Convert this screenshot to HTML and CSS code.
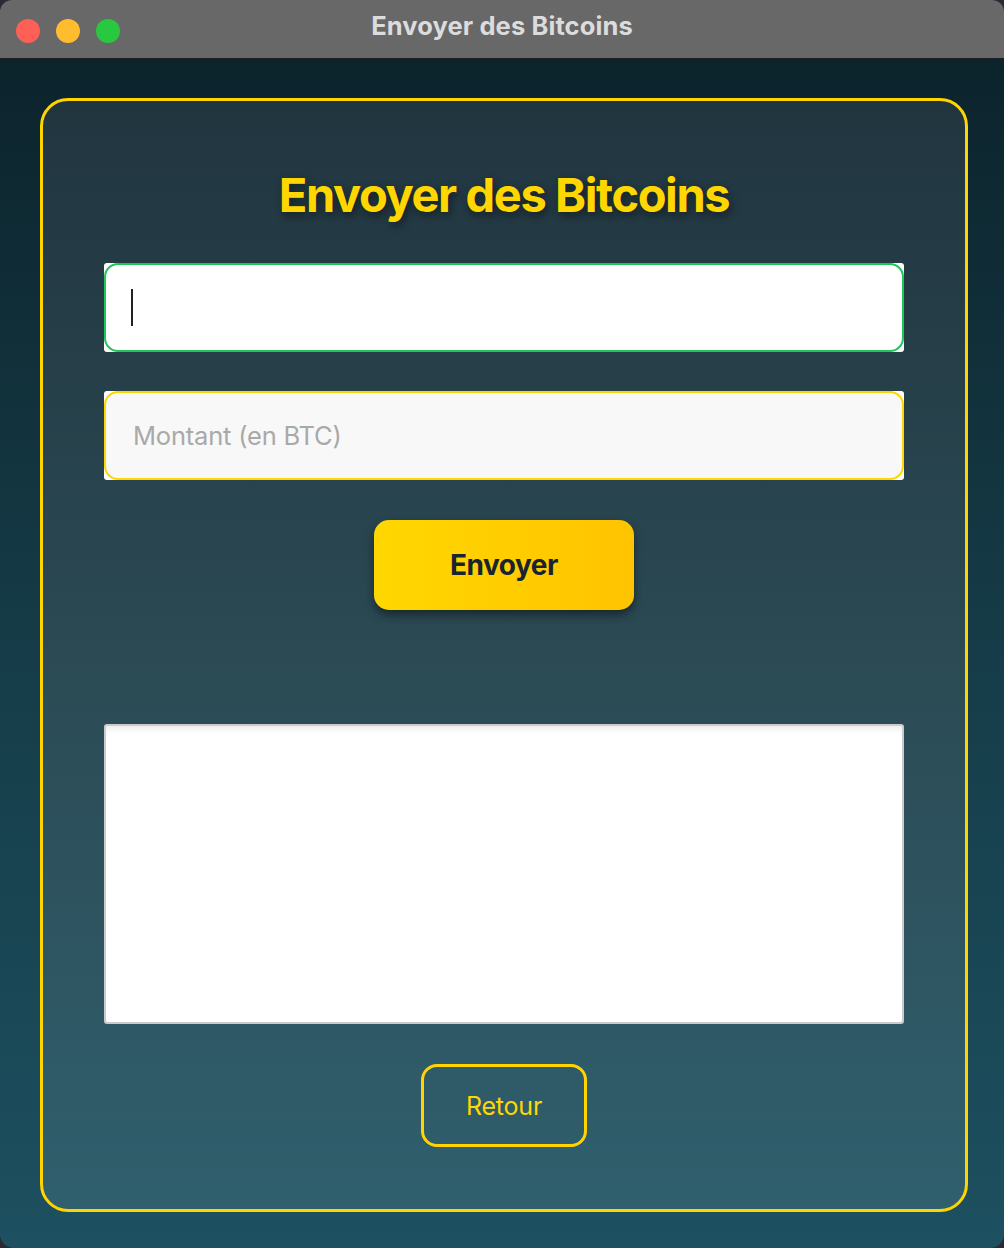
FILE: index.html
```html
<!DOCTYPE html>
<html lang="fr">
<head>
<meta charset="utf-8">
<title>Envoyer des Bitcoins</title>
<link rel="stylesheet" href="styles.css">
</head>
<body>
<div class="window">
  <div class="titlebar">
    <div class="lights">
      <span class="light red"></span>
      <span class="light yellow"></span>
      <span class="light green"></span>
    </div>
    <div class="wtitle">Envoyer des Bitcoins</div>
  </div>
  <div class="content">
    <div class="card">
      <h1 class="heading">Envoyer des Bitcoins</h1>
      <div class="field">
        <div class="input focused"><span class="caret"></span></div>
      </div>
      <div class="field">
        <div class="input amount"><span class="placeholder">Montant (en BTC)</span></div>
      </div>
      <button class="send">Envoyer</button>
      <div class="output"></div>
      <button class="back">Retour</button>
    </div>
  </div>
</div>
</body>
</html>
```
FILE: styles.css
```css
* { box-sizing: border-box; }
html, body { margin: 0; padding: 0; }
body {
  width: 1004px;
  height: 1248px;
  background: #2a2a33;
  font-family: Inter, "Noto Sans", sans-serif;
  overflow: hidden;
}
.window {
  width: 1004px;
  height: 1248px;
  display: flex;
  flex-direction: column;
  border-radius: 12px 12px 14px 14px;
  overflow: hidden;
  background: linear-gradient(180deg, #0b2129 0%, #153b47 50%, #1d5060 100%);
}
.titlebar {
  position: relative;
  height: 59px;
  flex: none;
  background: #686868;
  border-bottom: 1px solid #1e1e1e;
  display: flex;
  align-items: center;
  justify-content: center;
}
.lights {
  position: absolute;
  left: 16px;
  top: 19px;
  display: flex;
  gap: 16px;
}
.light { width: 24px; height: 24px; border-radius: 50%; display: block; }
.red { background: #fe5f57; }
.yellow { background: #febc2e; }
.green { background: #28c840; }
.wtitle {
  color: #dcdcdc;
  font-weight: 700;
  font-size: 25.5px;
  letter-spacing: 0.1px;
  margin-top: -7px;
}
.content {
  flex: 1;
  padding: 39px 36px 36px 40px;
  display: flex;
}
.card {
  flex: 1;
  border: 3px solid #ffd400;
  border-radius: 28px;
  background: linear-gradient(180deg, #21353f 0%, #2b4a54 50%, #305f6d 100%);
  padding: 62px 61px 62px;
  display: flex;
  flex-direction: column;
  align-items: center;
}
.heading {
  margin: 0 0 36px;
  color: #ffd700;
  font-size: 47px;
  font-weight: 700;
  letter-spacing: -1.4px;
  line-height: 64px;
  text-shadow: 2px 4px 8px rgba(0,0,0,0.45);
}
.field {
  width: 800px;
  height: 89px;
  background: #fff;
  border-radius: 3px;
  margin-bottom: 39px;
  flex: none;
}
.input {
  height: 100%;
  border-radius: 14px;
  border: 2px solid #22c55a;
  background: #fff;
  display: flex;
  align-items: center;
  padding-left: 25px;
}
.caret {
  width: 2px;
  height: 37px;
  background: #222;
  display: block;
}
.input.amount {
  border-color: #ffd700;
  background: #f8f8f8;
  padding-left: 27px;
}
.placeholder {
  color: #a9a9a9;
  font-size: 25.5px;
  letter-spacing: -0.2px;
}
.send {
  flex: none;
  width: 260px;
  height: 90px;
  margin-top: 1px;
  border: none;
  border-radius: 15px;
  background: linear-gradient(90deg, #ffd700 0%, #ffc400 100%);
  box-shadow: 0 5px 10px rgba(0,0,0,0.45);
  color: #1a2430;
  font-family: Inter, "Noto Sans", sans-serif;
  font-weight: 700;
  font-size: 28px;
  letter-spacing: -0.5px;
  padding: 0;
}
.output {
  flex: none;
  width: 800px;
  height: 300px;
  margin-top: 114px;
  background: #fff;
  border: 2px solid #c9cccc;
  border-radius: 3px;
  box-shadow: inset 0 6px 6px -3px rgba(0,0,0,0.08);
}
.back {
  flex: none;
  margin-top: 40px;
  width: 166px;
  height: 83px;
  background: transparent;
  border: 3px solid #ffd400;
  border-radius: 16px;
  color: #ffd700;
  font-family: Inter, "Noto Sans", sans-serif;
  font-size: 25px;
  letter-spacing: -0.2px;
  padding: 0;
}
```
